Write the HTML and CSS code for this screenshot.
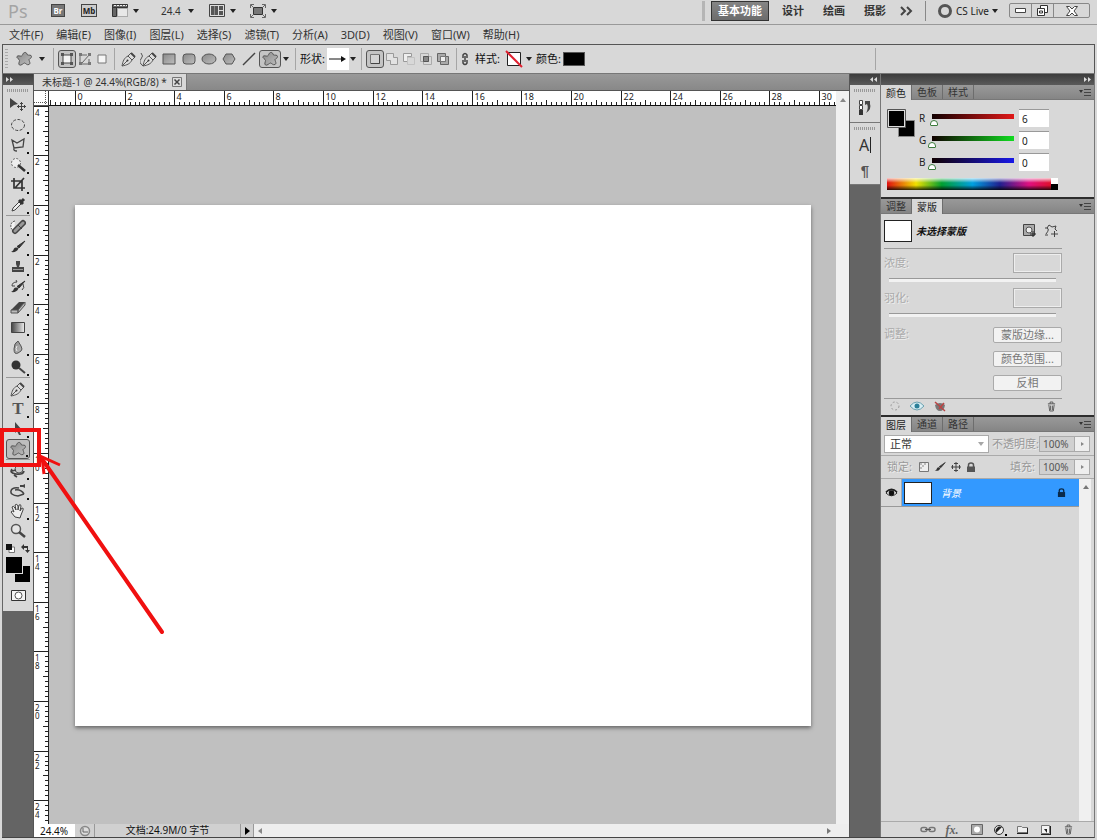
FILE: index.html
```html
<!DOCTYPE html>
<html lang="zh-CN">
<head>
<meta charset="utf-8">
<title>未标题-1 @ 24.4%(RGB/8)</title>
<link rel="stylesheet" href="styles.css">
</head>
<body>
<svg class="defs" aria-hidden="true">
  <linearGradient id="metal" x1="0" y1="0" x2="1" y2="1"><stop offset="0" stop-color="#8a8a8a"/><stop offset="1" stop-color="#bdbdbd"/></linearGradient>
  <linearGradient id="fade"><stop offset="0" stop-color="#444"/><stop offset="1" stop-color="#eee"/></linearGradient>
  <symbol id="blob" viewBox="0 0 18 16"><path d="M9.500 1.500c2-.5 2.500 1.500 3 2.500 1 .5 4-.5 4 1.500s-2 2-2.500 3c0 1.500 2 4 0 5s-3.500-1.500-4.500-1.500-3.500 3-5 2 0-3 0-4.500S1 7 2 5.500s3 0 4.500-.5S7.500 2 9.500 1.500Z" fill="url(#metal)" stroke="#555"/></symbol>
  <symbol id="caret" viewBox="0 0 6 4"><path d="M0 0h6L3 4Z" fill="#222"/></symbol>
  <symbol id="brush" viewBox="0 0 16 16"><path d="M15 2 9 9 7 7.500Z" fill="#333" stroke="#333"/><path d="M8.500 9.500C7 13 4 13.500 1 13c2-1 2.500-2 3-3.500 1-1.500 3-1.500 4.500 0Z" fill="#333"/></symbol>
  <symbol id="pen" viewBox="0 0 16 16"><path d="M1 15C2 10 3 7 7 5l4 4c-2 4-5 5-10 6ZM7 5l3-3 4 4-3 3M1 15l5-5" fill="#ddd" stroke="#555"/><path d="m10 2 4 4" stroke="#444" stroke-width="2"/><circle cx="6.500" cy="9.500" r="1" fill="#333"/></symbol>
  <symbol id="eye" viewBox="0 0 14 10"><path d="M1 5q6-7 12 0-6 6-12 0Z" fill="#e9e9e9" stroke="#222"/><circle cx="7" cy="5" r="3" fill="#111"/><path d="M1 4q6-6 12 0" fill="none" stroke="#222" stroke-width="1.500"/></symbol>
  <symbol id="lock" viewBox="0 0 10 10"><path d="M2.500 5V3q0-2 2.500-2t2.500 2v2" fill="none" stroke="currentColor" stroke-width="1.500"/><path d="M1 4.500h8V10H1Z" fill="currentColor"/></symbol>
  <symbol id="trash" viewBox="0 0 10 12"><path d="M1 3h8M3.500 3V1h3v2M2 4l1 7h4l1-7M4 5v5M6 5v5" fill="none" stroke="#555"/></symbol>
  <symbol id="menu" viewBox="0 0 12 8"><path d="M0 2h4L2 5Z" fill="#333"/><path d="M5 1.500h7M5 4.500h7M5 7.500h7" stroke="#444"/></symbol>
</svg>

<header class="appbar">
  <div class="logo">Ps</div>
  <button class="badge" aria-label="Bridge">Br</button>
  <button class="badge mb" aria-label="Mini Bridge">Mb</button>
  <button class="pick" aria-label="查看额外内容"><svg width="16" height="13"><path d="M.5.500h15v3H.5ZM.5 3.500h4v9h-4Z" fill="#666" stroke="#333"/><path d="M2 1.500h13" stroke="#eee" stroke-dasharray="2 1"/><path d="M5.500 4.500h10v8h-10Z" fill="#e8e8e8" stroke="#777" stroke-dasharray="1"/></svg><svg class="caret"><use href="#caret"/></svg></button>
  <button class="pick zoom">24.4<svg class="caret"><use href="#caret"/></svg></button>
  <button class="pick" aria-label="排列文档"><svg width="16" height="13"><path d="M.5.500h15v12H.5Z" fill="#ddd" stroke="#444"/><path d="M2 2h7v9H2ZM10 2h4v4h-4ZM10 7h4v4h-4Z" fill="#555"/><path d="M5.500 2v9" stroke="#888"/></svg><svg class="caret"><use href="#caret"/></svg></button>
  <button class="pick screen" aria-label="屏幕模式"><svg width="16" height="14"><path d="M3.500 3.500h9v7h-9Z" fill="#777" stroke="#333"/><path d="M.5 4V.500H4M12 .500h3.500V4M15.500 10v3.500H12M4 13.500H.5V10M1 1l2 2M15 1l-2 2M1 13l2-2M15 13l-2-2" fill="none" stroke="#666"/></svg><svg class="caret"><use href="#caret"/></svg></button>
  <nav class="workspaces">
    <button class="space on">基本功能</button>
    <button class="space">设计</button>
    <button class="space">绘画</button>
    <button class="space">摄影</button>
    <button class="more" aria-label="更多"><svg width="14" height="10"><path d="m1 1 4 4-4 4M7 1l4 4-4 4" fill="none" stroke="#444" stroke-width="2"/></svg></button>
  </nav>
  <button class="live"><svg width="16" height="16"><circle cx="8" cy="8" r="5.500" fill="none" stroke="#555" stroke-width="3"/></svg>CS Live<svg class="caret"><use href="#caret"/></svg></button>
  <div class="winctl">
    <button aria-label="最小化"><svg width="11" height="5"><path d="M.5.500h10v4H.5Z" fill="#fff" stroke="#444"/></svg></button>
    <button aria-label="还原"><svg width="11" height="11"><path d="M3.500.500h7v7h-7Z" fill="#fff" stroke="#333"/><path d="M.5 3.500h7v7h-7ZM2.500 6h3v2h-3Z" fill="#fff" stroke="#333"/></svg></button>
    <button class="close" aria-label="关闭"><svg width="12" height="10"><path d="M.5.500h3L6 3 8.500.500h3L8 5l3.500 4.500h-3L6 7 3.500 9.500h-3L4 5Z" fill="#fff" stroke="#444"/></svg></button>
  </div>
</header>

<nav class="menubar">
  <button>文件(F)</button><button>编辑(E)</button><button>图像(I)</button><button>图层(L)</button><button>选择(S)</button><button>滤镜(T)</button><button>分析(A)</button><button>3D(D)</button><button>视图(V)</button><button>窗口(W)</button><button>帮助(H)</button>
</nav>

<section class="options">
  <i class="grip"></i>
  <button class="opt wide" aria-label="自定形状工具"><svg width="18" height="16"><use href="#blob"/></svg></button>
  <button class="drop" aria-label="预设"><svg class="caret"><use href="#caret"/></svg></button>
  <i class="rule"></i>
  <button class="opt on" aria-label="形状图层"><svg width="14" height="14"><path d="M3 3h8v8H3Z" fill="#f4f4f4" stroke="#444"/><path d="M1 1h3v3H1ZM10 1h3v3h-3ZM1 10h3v3H1ZM10 10h3v3h-3Z" fill="#555"/></svg></button>
  <button class="opt slim" aria-label="路径"><svg width="14" height="14"><path d="M2 3h7M2 3v9h9V7M4 11 12 2" fill="none" stroke="#666"/><path d="M1 1h3v3H1ZM10 1h3v3h-3ZM1 10h3v3H1ZM10 10h3v3h-3Z" fill="#777"/></svg></button>
  <button class="opt slim" aria-label="填充像素"><svg width="10" height="10"><path d="M1 1h8v8H1Z" fill="#f6f6f6" stroke="#777"/></svg></button>
  <i class="rule"></i>
  <button class="opt tool" aria-label="钢笔"><svg width="16" height="16"><use href="#pen"/></svg></button>
  <button class="opt tool" aria-label="自由钢笔"><svg width="18" height="16"><use href="#pen" x="1"/><path d="M1 2q3 3 0 6t2 7" fill="none" stroke="#555"/></svg></button>
  <button class="opt tool" aria-label="矩形"><svg width="14" height="12"><path d="M1 1h12v10H1Z" fill="url(#metal)" stroke="#555"/></svg></button>
  <button class="opt tool" aria-label="圆角矩形"><svg width="14" height="12"><rect x="1" y="1" width="12" height="10" rx="3" fill="url(#metal)" stroke="#555"/></svg></button>
  <button class="opt tool" aria-label="椭圆"><svg width="16" height="12"><ellipse cx="8" cy="6" rx="7" ry="5" fill="url(#metal)" stroke="#555"/></svg></button>
  <button class="opt tool" aria-label="多边形"><svg width="14" height="14"><path d="M4 2h6l3 5-3 5H4L1 7Z" fill="url(#metal)" stroke="#555"/></svg></button>
  <button class="opt tool" aria-label="直线"><svg width="14" height="14"><path d="M1 13 13 1" stroke="#444" stroke-width="1.500"/></svg></button>
  <button class="opt on big" aria-label="自定形状"><svg width="18" height="16"><use href="#blob"/></svg></button>
  <button class="drop thin" aria-label="几何选项"><svg class="caret"><use href="#caret"/></svg></button>
  <i class="rule"></i>
  <span class="lbl">形状:</span>
  <button class="shape" aria-label="箭头形状"><svg width="18" height="8"><path d="M0 4h15" stroke="#111"/><path d="m12 1 5 3-5 3Z" fill="#111"/></svg></button>
  <button class="drop thin" aria-label="选择形状"><svg class="caret"><use href="#caret"/></svg></button>
  <i class="rule"></i>
  <button class="opt on" aria-label="新建"><svg width="12" height="12"><path d="M1.500 1.500h9v9h-9Z" fill="#d4d4d4" stroke="#777"/><path d="M2 10.500h8.500V2" fill="none" stroke="#444"/></svg></button>
  <button class="opt slim" aria-label="添加"><svg width="12" height="12"><path d="M.5.500h7v4h4v7h-7v-4h-4Z" fill="#e2e2e2" stroke="#999"/></svg></button>
  <button class="opt slim" aria-label="减去"><svg width="12" height="12"><path d="M.5 8.500v-8h8v3h-4v5Z" fill="#eee" stroke="#999"/><path d="M4.500 4.500h7v7h-7Z" fill="none" stroke="#c2c2c2"/></svg></button>
  <button class="opt slim" aria-label="交叉"><svg width="12" height="12"><path d="M.5.500h8v8h-8ZM3.500 3.500h8v8h-8Z" fill="none" stroke="#aaa"/><path d="M3.500 3.500h5v5h-5Z" fill="#888" stroke="#555"/></svg></button>
  <button class="opt slim" aria-label="排除"><svg width="12" height="12"><path d="M.5.500h8v8h-8ZM3.500 3.500h8v8h-8Z" fill="#aaa" stroke="#666"/><path d="M3.500 3.500h5v5h-5Z" fill="#eee" stroke="#777"/></svg></button>
  <i class="rule"></i>
  <svg class="chain" width="10" height="14"><path d="M3 6V3q2-3 4 0v3M3 8v3q2 3 4 0V8M5 4v6" fill="none" stroke="#444" stroke-width="1.500"/></svg>
  <span class="lbl">样式:</span>
  <button class="nostyle" aria-label="无样式"><svg width="18" height="18"><path d="M2.500 2.500h13v13h-13Z" fill="#fff" stroke="#222"/><path d="m1 1 16 16" stroke="#e02030" stroke-width="2"/></svg></button>
  <button class="drop" aria-label="选择样式"><svg class="caret"><use href="#caret"/></svg></button>
  <span class="lbl">颜色:</span>
  <button class="ink" aria-label="颜色"></button>
  <i class="rule tail"></i>
</section>

<main class="workspace">
  <aside class="tools">
    <div class="dockhead left"><svg width="7" height="5"><path d="m0 0 3 2.500L0 5ZM4 0l3 2.500L4 5Z" fill="#ddd"/></svg></div>
    <div class="toolbox">
      <i class="dots"></i>
      <button aria-label="移动"><svg><path d="m0 1 8 6-4 1-4 3Z" fill="#444"/><path d="M11.500 5v9M7 9.500h9M10 6.500h3M10 12.500h3M8.500 8v3M14.500 8v3" stroke="#444"/></svg></button>
      <button class="sub" aria-label="椭圆选框"><svg><ellipse cx="8" cy="8" rx="6.500" ry="5.500" fill="none" stroke="#444" stroke-dasharray="3 1.500"/></svg></button>
      <button class="sub" aria-label="套索"><svg><path d="m2 3 5 3 7-4-1 8-9 1ZM4 11q-1 3 3 3" fill="none" stroke="#444" stroke-width="1.300"/></svg></button>
      <button class="sub" aria-label="魔棒"><svg><circle cx="6" cy="6" r="4.500" fill="#eee" stroke="#666" stroke-dasharray="2 1.500"/><path d="m8 8 7 6" stroke="#333" stroke-width="2.500"/></svg></button>
      <button class="sub" aria-label="裁剪"><svg><path d="M4 1v10h11M1 4h11v10M5 11 14 1" fill="none" stroke="#333" stroke-width="1.700"/></svg></button>
      <button class="sub" aria-label="吸管"><svg><path d="m2 14 1-3 6-6 2 2-6 6Z" fill="#eee" stroke="#444"/><path d="m9 3 4 4M10 6l4-4" stroke="#333" stroke-width="3"/></svg></button>
      <hr>
      <button class="sub" aria-label="修复画笔"><svg><path d="M5 2Q0 3 1 9l3 4" fill="#f4f4f4" stroke="#555" stroke-dasharray="2 1"/><path d="m5 12 8-8" stroke="#444" stroke-width="6" stroke-linecap="round"/><path d="m5 12 8-8" stroke="#999" stroke-width="3" stroke-linecap="round"/><path d="m8 6 4 4" stroke="#444"/></svg></button>
      <button class="sub" aria-label="画笔"><svg><use href="#brush"/></svg></button>
      <button class="sub" aria-label="图章"><svg><path d="M6 2h4v3L9 8h5v5H2V8h5L6 5Z" fill="#444"/><path d="M3 10.500h10" stroke="#999"/></svg></button>
      <button class="sub" aria-label="历史画笔"><svg><use href="#brush"/><path d="M2 7q0-4 5-4L6 1M2 7h3M13 5q2 4-1 6" fill="none" stroke="#444"/></svg></button>
      <button class="sub" aria-label="橡皮擦"><svg><path d="m1 11 8-8h6L8 11Z" fill="#444"/><path d="M1 11h7v3H1ZM8 14l7-8V3l-7 8Z" fill="#bbb" stroke="#555"/></svg></button>
      <button class="sub" aria-label="渐变"><svg><path d="M1.500 3.500h13v10h-13Z" fill="url(#fade)" stroke="#444"/></svg></button>
      <button class="sub" aria-label="模糊"><svg><path d="M8 2q4 6 4 8t-4 4-4-4 4-8Z" fill="url(#metal)" stroke="#555"/><path d="M7 7q-2 3 0 5" fill="none" stroke="#eee"/></svg></button>
      <button class="sub" aria-label="减淡"><svg><circle cx="6" cy="6" r="4.500" fill="#333"/><path d="m9 9 6 5" stroke="#444" stroke-width="2"/></svg></button>
      <hr>
      <button class="sub" aria-label="钢笔"><svg><use href="#pen"/></svg></button>
      <button class="sub" aria-label="文字"><span class="type">T</span></button>
      <button class="sub" aria-label="路径选择"><svg><path d="m5 1 7 8H9l2 5H9L7 10l-2 2Z" fill="#444"/></svg></button>
      <button class="sub active" aria-label="自定形状"><svg class="shapeicon"><use href="#blob"/></svg></button>
      <hr>
      <button class="sub" aria-label="3D 旋转"><svg><circle cx="9" cy="6" r="4" fill="#ccc" stroke="#555"/><path d="M2 6q-3 4 4 5t8-3M4 12l3 2M6 7l-4 1" fill="none" stroke="#444" stroke-width="1.700"/></svg></button>
      <button class="sub" aria-label="3D 相机"><svg><path d="M9 5Q2 4 1 8t7 5l6-2M5 7q6-1 9 4" fill="none" stroke="#444" stroke-width="1.500"/><path d="M10 2h3l2-1v4l-2-1h-3Z" fill="#444"/></svg></button>
      <button class="sub" aria-label="抓手"><svg><path d="m5 14-4-5q1-2 3 0L2 4q1-2 3 1l1 2-1-5q2-2 3 1v4l1-5q2-1 2 1l-1 5 2-3q2 0 1 2l-2 5-1 3Z" fill="#eee" stroke="#444"/></svg></button>
      <button aria-label="缩放"><svg><circle cx="6" cy="6" r="4.500" fill="#e5e5e5" stroke="#555" stroke-width="1.500"/><path d="m9 9 6 5" stroke="#444" stroke-width="2.500"/></svg></button>
      <div class="mini"><svg width="9" height="9"><path d="M3 3h5.500v5.500H3Z" fill="#fff" stroke="#777"/><path d="M0 0h6v6H0Z" fill="#111"/></svg><svg width="9" height="9"><path d="M0 3 3 0v2h4v4h2L6.500 9 4 6h2V4H3v2Z" fill="#333"/></svg></div>
      <svg class="inks" width="25" height="26"><path d="M9 9h15v16H9Z"/><path d="M0 0h17v17H0Z" fill="#ddd"/><path d="M0 0h16v16H0Z"/></svg>
      <button class="mask" aria-label="快速蒙版"><svg width="15" height="11"><path d="M.5.500h14v10H.5Z" fill="#f5f5f5" stroke="#333"/><circle cx="7.500" cy="5.500" r="3.500" fill="#fff" stroke="#555"/></svg></button>
    </div>
  </aside>

  <section class="document">
    <div class="tabs"><div class="tab">未标题-1 @ 24.4%(RGB/8) *<button aria-label="关闭文档"><svg width="10" height="10"><path d="M.5.500h9v9h-9Z" fill="#ddd" stroke="#777"/><path d="m2.500 2.500 5 5M7.500 2.500l-5 5" stroke="#444" stroke-width="1.500"/></svg></button></div></div>
    <div class="view">
      <svg class="corner"><path d="M11.500 0v15M0 11.500h15" stroke="#555" stroke-dasharray="1"/></svg>
      <svg class="ruler-x" id="ruler-x"></svg>
      <svg class="ruler-y" id="ruler-y"></svg>
      <div class="pasteboard"><div class="paper"></div></div>
      <div class="scroll-y"><svg width="6" height="4"><path d="M0 4 3 0l3 4Z" fill="#888"/></svg></div>
    </div>
    <footer class="status">
      <input class="pct" value="24.4%" aria-label="缩放比例">
      <svg class="clock" width="12" height="12"><circle cx="6" cy="6" r="4.500" fill="#ddd" stroke="#888" stroke-width="1.500"/><path d="M4 3v4h5" fill="none" stroke="#666"/></svg>
      <div class="info">文档:24.9M/0 字节</div>
      <button class="play" aria-label="状态选项"><svg width="5" height="8"><path d="m0 0 5 4-5 4Z"/></svg></button>
      <div class="scroll-x"><svg width="4" height="6"><path d="M4 0 0 3l4 3Z" fill="#888"/></svg><svg width="4" height="6"><path d="m0 0 4 3-4 3Z" fill="#777"/></svg></div>
    </footer>
  </section>

  <aside class="dock">
    <div class="dockhead"><svg width="7" height="5"><path d="M3 0 0 2.500 3 5ZM7 0 4 2.500 7 5Z" fill="#ddd"/></svg></div>
    <div class="dockbox">
      <i class="dots"></i>
      <button class="first" aria-label="历史记录"><svg width="14" height="16"><path d="M1.500.500h3v4h-3ZM1.500 5.500h3v4h-3Z" fill="#fff" stroke="#444"/><path d="M1 10h4v5H1Z" fill="#333"/><path d="M7 5V1h5v3q2 5-4 9 3-5 1-9Z" fill="#444"/></svg></button>
    </div>
    <div class="dockbox">
      <i class="dots"></i>
      <button aria-label="字符" class="char"><span>A</span></button>
      <button aria-label="段落" class="para">¶</button>
    </div>
  </aside>

  <aside class="panels">
    <div class="dockhead right"><svg width="7" height="5"><path d="m0 0 3 2.500L0 5ZM4 0l3 2.500L4 5Z" fill="#ddd"/></svg></div>

    <section class="panel">
      <div class="ptabs"><button class="on">颜色</button><button>色板</button><button>样式</button><svg class="pmenu"><use href="#menu"/></svg></div>
      <div class="color">
        <svg class="pair" width="29" height="29"><path d="M11.500 11.500h16v16h-16Z" stroke="#888"/><path d="M.5.500h18v18H.5Z" fill="#ddd" stroke="#555"/><path d="M2 2h15v15H2Z"/></svg>
        <div class="channels">
          <label for="r">R</label><input type="range" id="r" class="red" max="255" value="6"><input class="num" value="6" aria-label="R 值">
          <label for="g">G</label><input type="range" id="g" class="green" max="255" value="0"><input class="num" value="0" aria-label="G 值">
          <label for="b">B</label><input type="range" id="b" class="blue" max="255" value="0"><input class="num" value="0" aria-label="B 值">
        </div>
        <div class="spectrum"><i></i></div>
      </div>
    </section>

    <section class="panel">
      <div class="ptabs"><button>调整</button><button class="on">蒙版</button><svg class="pmenu"><use href="#menu"/></svg></div>
      <div class="masks">
        <div class="mhead"><i class="thumb"></i><b>未选择蒙版</b>
          <button aria-label="添加像素蒙版"><svg width="13" height="13"><path d="M.5.500h11v11H.5Z" fill="#aaa" stroke="#444"/><circle cx="6" cy="6" r="3" fill="#eee" stroke="#555"/><path d="M7 10h6M10 7v6" stroke="#222"/></svg></button>
          <button aria-label="添加矢量蒙版"><svg width="13" height="13"><path d="M1 10Q5 5 2 4l2-3 3 2 4-1-1 3 2 2" fill="none" stroke="#444"/><path d="M0 4h3M0 11h3M6 10h7M9.500 7v6" stroke="#444"/></svg></button>
        </div>
        <div class="mrow"><label for="density">浓度:</label><input class="off" id="density" disabled></div>
        <input type="range" class="flat" disabled aria-label="浓度">
        <div class="mrow"><label for="feather">羽化:</label><input class="off" id="feather" disabled></div>
        <input type="range" class="flat" disabled aria-label="羽化">
        <div class="adjust"><span>调整:</span><div><button disabled>蒙版边缘...</button><button disabled>颜色范围...</button><button disabled>反相</button></div></div>
        <div class="mfoot">
          <svg width="10" height="10"><circle cx="5" cy="5" r="4" fill="none" stroke="#999" stroke-dasharray="2"/></svg>
          <svg width="14" height="10"><path d="M0 5q7-8 14 0-7 8-14 0Z" fill="#d8eef4" stroke="#6aa0ae"/><circle cx="7" cy="5" r="2.500" fill="#2a7f98"/></svg>
          <svg width="12" height="11"><path d="M1 4q5-4 10 0-1 6-5 6T1 4Z" fill="#777"/><path d="m1 1 10 9M10 2 5 8" stroke="#b44" stroke-width="1.500"/></svg>
          <svg class="end" width="9" height="11" viewBox="0 0 10 12"><use href="#trash" width="10" height="12"/></svg>
        </div>
      </div>
    </section>

    <section class="panel layers">
      <div class="ptabs"><button class="on">图层</button><button>通道</button><button>路径</button><svg class="pmenu"><use href="#menu"/></svg></div>
      <div class="lrow">
        <div class="blend"><select aria-label="混合模式"><option>正常</option></select><svg class="caret"><use href="#caret"/></svg></div>
        <label for="opacity">不透明度:</label><input id="opacity" value="100%" disabled><button class="step" disabled aria-label="调整不透明度"><svg width="3" height="4"><path d="m0 0 3 2-3 2Z" fill="#888"/></svg></button>
      </div>
      <div class="lrow locks">
        <span>锁定:</span>
        <button aria-label="锁定透明像素"><svg width="12" height="12"><path d="M1.500 1.500h9v9h-9Z" fill="#eee" stroke="#777"/><path d="M2 2h2v2H2ZM6 2h2v2H6ZM4 4h2v2H4ZM2 6h2v2H2Z" fill="#bbb"/></svg></button>
        <button aria-label="锁定图像像素"><svg width="12" height="12" viewBox="0 0 16 16"><use href="#brush" width="16" height="16"/></svg></button>
        <button aria-label="锁定位置"><svg width="12" height="12"><path d="M6 1v10M1 6h10M4 2.500h4M4 9.500h4M2.500 4v4M9.500 4v4" stroke="#444"/></svg></button>
        <button aria-label="锁定全部"><svg class="grey" width="10" height="10"><use href="#lock"/></svg></button>
        <label for="fill">填充:</label><input id="fill" value="100%" disabled><button class="step" disabled aria-label="调整填充"><svg width="3" height="4"><path d="m0 0 3 2-3 2Z" fill="#888"/></svg></button>
      </div>
      <div class="list">
        <div class="rows">
          <div class="layer"><button class="vis" aria-label="可见性"><svg width="13" height="10"><use href="#eye"/></svg></button><div class="item"><i class="thumb"></i><em>背景</em><svg width="9" height="9" viewBox="0 0 10 10"><use href="#lock" width="10" height="10"/></svg></div></div>
        </div>
        <div class="lscroll"><svg width="6" height="4"><path d="M0 4 3 0l3 4Z" fill="#777"/></svg></div>
      </div>
      <div class="lfoot">
        <button aria-label="链接图层"><svg width="16" height="8"><rect x="1" y="1.500" width="6" height="4" rx="2" fill="none" stroke="#777" stroke-width="1.500"/><rect x="9" y="1.500" width="6" height="4" rx="2" fill="none" stroke="#777" stroke-width="1.500"/><path d="M5 3.500h6" stroke="#555"/></svg></button>
        <button class="fx">fx.</button>
        <button aria-label="添加蒙版"><svg width="12" height="11"><path d="M.5.500h11v10H.5Z" fill="#aaa" stroke="#666"/><circle cx="6" cy="5.500" r="3" fill="#fff"/></svg></button>
        <button aria-label="调整图层"><svg width="14" height="12"><circle cx="6" cy="6" r="4.500" fill="#eee" stroke="#333"/><path d="M3 9A4.500 4.500 0 0 1 9 3Z" fill="#222"/><path d="M12 10h2v2h-2Z"/></svg></button>
        <button aria-label="新建组"><svg width="11" height="9"><path d="M.5 1.500h4l1 1h5v5H.5Z" fill="#eee" stroke="#777"/><path d="M0 8.500h11M10.500 3v5" stroke="#222"/></svg></button>
        <button aria-label="新建图层"><svg width="10" height="10"><path d="M.5.500h8v8h-8Z" fill="#f5f5f5" stroke="#777"/><path d="M0 9.500h10M9.500 1v8" stroke="#222"/><path d="M3 4h3v4Z" fill="#222"/></svg></button>
        <button aria-label="删除图层"><svg width="9" height="11" viewBox="0 0 10 12"><use href="#trash" width="10" height="12"/></svg></button>
      </div>
    </section>
  </aside>
</main>

<svg class="callout" width="180" height="220" fill="none" stroke="#f01010" aria-hidden="true"><path d="M2 5h37v35H2Z" stroke-width="4"/><path d="M42 34 162 207" stroke-width="4" stroke-linecap="round"/><path d="m60 40-18-8 2 17" stroke-width="3"/></svg>
<script src="rulers.js"></script>
</body>
</html>
```

FILE: styles.css
```css
* { box-sizing: border-box; }
body {
  margin: 0; height: 100vh; display: flex; flex-direction: column; overflow: hidden;
  position: relative; padding-bottom: 2px; background: #d8d8d8; color: #333;
  font: 11px/14px "Noto Sans", "Noto Sans CJK SC", sans-serif;
}
button, input, select { font: inherit; color: inherit; margin: 0; padding: 0; border: 0; background: none; border-radius: 0; }
button { display: flex; align-items: center; justify-content: center; white-space: nowrap; }
svg { display: block; flex: none; }
.defs { position: absolute; width: 0; height: 0; }
.caret { width: 6px; height: 4px; }

.appbar { display: flex; align-items: center; height: 25px; padding: 0 7px 3px 8px; border-bottom: 1px solid #999; flex: none; }
.logo { width: 43px; font-size: 18px; line-height: 20px; color: #a4a4a4; }
.badge { width: 14px; height: 13px; background: #777; border: 1px solid #444; color: #fff; font-size: 8px; line-height: 11px; font-weight: bold; margin-right: 16px; }
.badge.mb { width: 16px; background: #ccc; color: #222; margin-right: 15px; }
.pick { gap: 5px; margin-right: 22px; font-size: 10px; }
.pick.zoom { gap: 7px; margin-right: 15px; }
.pick.screen { margin-left: -8px; }
.workspaces { display: flex; align-items: center; height: 20px; margin-left: auto; border-left: 3px solid #b5b5b5; padding-left: 6px; font-weight: bold; }
.space { height: 20px; padding: 0 6px; margin-right: 7px; }
.space.on { background: linear-gradient(#858585, #6c6c6c); border: 1px solid #333; color: #fff; }
.more { margin-left: 1px; margin-right: 11px; }
.live { border-left: 1px solid #888; height: 20px; padding-left: 11px; gap: 3px; font-size: 10px; color: #222; }
.winctl { display: flex; height: 15px; margin-left: 11px; border: 1px solid #888; border-radius: 2px; }
.winctl button { width: 22px; border-right: 1px solid #888; }
.winctl .close { width: 35px; border: 0; }

.menubar { display: flex; align-items: center; gap: 13px; height: 19px; padding-left: 9px; flex: none; }
.options { display: flex; align-items: center; height: 30px; margin: 0 2px; border: 1px solid #555; border-bottom-color: #777; padding-left: 2px; flex: none; color: #111; }
.grip { width: 3px; height: 20px; margin-right: 6px; background: repeating-linear-gradient(#aaa 0 1px, #d8d8d8 1px 3px); }
.opt { width: 18px; height: 18px; flex: none; }
.opt.wide { width: 20px; }
.opt.slim { width: 17px; }
.opt.tool { width: 20px; height: 20px; }
.opt.big { width: 22px; }
.opt.on { border: 1px solid #555; border-radius: 3px; background: #c4c4c4; }
.drop { width: 13px; height: 20px; }
.wide + .drop { width: 15px; }
.drop.thin { width: 10px; }
.rule { width: 1px; height: 22px; background: #a5a5a5; margin: 0 4px; }
.rule.tail { margin-left: auto; margin-right: 218px; }
.lbl { white-space: nowrap; margin-right: 2px; }
.shape { width: 22px; height: 22px; background: #fff; }
.shape + .drop.thin { width: 8px; }
.chain { margin: 0 5px 0 -1px; }
.nostyle { margin-left: 3px; }
.ink { width: 22px; height: 14px; background: #000; border: 1px solid #555; }

.workspace { display: flex; flex: 1; min-height: 0; margin: 0 2px; border-bottom: 1px solid #444; border-right: 1px solid #777; }
.dockhead { height: 11px; flex: none; display: flex; align-items: center; justify-content: flex-end; padding: 0 3px; background: linear-gradient(#3c3c3c, #5a5a5a); }
.dockhead.left { justify-content: flex-start; }
.tools { width: 32px; flex: none; background: #646464; border-right: 1px solid #555; border-left: 1px solid #666; }
.toolbox { display: flex; flex-direction: column; height: 526px; background: #d8d8d8; }
.dots { height: 3px; margin: 4px 4px 3px; flex: none; background: repeating-linear-gradient(90deg, #999 0 1px, #d8d8d8 1px 2px); }
.toolbox button { width: 24px; height: 20px; margin-left: 3px; flex: none; position: relative; }
.toolbox button svg { width: 16px; height: 16px; }
.toolbox .sub::after { content: ""; position: absolute; right: 1px; bottom: 1px; border: 1px solid #111; }
.toolbox .active { border: 1px solid #555; border-radius: 3px; background: #bdbdbd; }
.toolbox button .shapeicon { width: 18px; }
.toolbox hr { width: 24px; height: 1px; margin: 0 0 1px 3px; border: 0; background: #999; flex: none; }
.toolbox .type { font: bold 17px/18px "Liberation Serif", serif; color: #555; }
.mini { display: flex; gap: 6px; padding: 3px 0 0 3px; height: 16px; }
.inks { margin: 0 0 6px 3px; }
.toolbox .mask { height: 12px; }
.toolbox .mask svg { width: 15px; height: 11px; }

.document { flex: 1; min-width: 0; display: flex; flex-direction: column; }
.tabs { height: 17px; flex: none; display: flex; background: linear-gradient(#999, #888); border-bottom: 1px solid #555; }
.tab { display: flex; align-items: center; gap: 5px; padding: 0 4px 0 8px; background: #d8d8d8; border-right: 1px solid #777; white-space: nowrap; font-size: 10px; }
.view { flex: 1; min-height: 0; display: grid; grid-template: 15px minmax(0, 1fr) / 15px minmax(0, 1fr) 13px; }
.corner { width: 15px; height: 15px; background: #fff; border-bottom: 1px solid #555; border-right: 1px solid #333; }
.ruler-x { width: 100%; height: 15px; background: #fff; border-bottom: 1px solid #111; }
.ruler-y { grid-row: 2; width: 15px; height: 100%; background: #fff; border-right: 1px solid #222; }
.ruler-x text { font-size: 9px; fill: #222; }
.ruler-y text { font-size: 8px; fill: #222; }
.pasteboard { grid-row: 2; grid-column: 2; display: flex; padding: 99px 25px 98px 26px; background: #c0c0c0; }
.paper { flex: 1; background: #fff; box-shadow: 0 2px 4px #666; }
.scroll-y { grid-area: 1 / 3 / 3 / 4; background: #f0f0f0; padding: 7px 0 0 4px; }
.status { height: 13px; flex: none; display: flex; align-items: center; background: #d0d0d0; color: #111; font-size: 10px; line-height: 12px; }
.pct { width: 41px; height: 13px; padding-left: 6px; background: #fff; }
.clock { margin: 0 3px 0 4px; }
.info { width: 147px; height: 13px; text-align: center; border-left: 1px solid #999; border-right: 1px solid #999; white-space: nowrap; }
.play { width: 13px; height: 13px; border-right: 1px solid #999; }
.scroll-x { flex: 1; display: flex; justify-content: space-between; align-items: center; height: 13px; padding: 0 18px 0 4px; background: #eee; }

.dock { width: 31px; flex: none; background: #646464; border-left: 1px solid #555; }
.dockbox { background: #d8d8d8; border-bottom: 1px solid #777; padding-top: 1px; }
.dockbox .dots { display: block; margin: 3px 4px 2px; }
.dockbox button { width: 100%; height: 26px; }
.dockbox .first { height: 28px; }
.char { font-size: 16px; line-height: 16px; color: #333; }
.char span { border-right: 1px solid #222; padding-right: 1px; }
.para { font: bold 15px/20px "Liberation Sans", sans-serif; color: #555; }

.panels { width: 214px; flex: none; display: flex; flex-direction: column; border-left: 1px solid #777; }
.panel + .panel { border-top: 2px solid #2d2d2d; }
.ptabs { display: flex; height: 15px; background: linear-gradient(#999, #858585); border-bottom: 1px solid #777; color: #333; }
.ptabs button { width: 31px; border-right: 1px solid #6d6d6d; font-size: 10px; line-height: 14px; }
.ptabs .on { background: #d8d8d8; color: #222; height: 15px; }
.pmenu { width: 12px; height: 8px; margin: 3px 3px 0 auto; }
.color { display: grid; grid-template-columns: 32px 132px 1fr; height: 97px; padding: 7px 0 0 6px; align-content: start; }
.pair { margin-top: 2px; }
.channels { display: grid; grid-template-columns: 9px 90px 30px; grid-auto-rows: 22px; align-items: center; color: #222; font-size: 10px; }
.channels .num { width: 30px; height: 18px; margin-left: 1px; padding-left: 3px; background: #fff; border-top: 1px solid #999; }
.channels input[type=range] { appearance: none; width: 90px; height: 16px; margin-left: 0; background: linear-gradient(90deg, #100, var(--end)) no-repeat 4px 4px / 82px 5px; }
.channels input[type=range]::-webkit-slider-thumb { appearance: none; width: 8px; height: 6px; margin-top: 9px; background: #fff; border: 1px solid #3b7a3b; border-radius: 4px 4px 1px 1px; }
.red { --end: #e01818; }
.green { --end: #10dc20; }
.blue { --end: #1818e8; }
.spectrum { grid-column: 1 / 3; width: 171px; height: 12px; margin-top: 5px; display: flex; justify-content: flex-end; background: linear-gradient(#ffffffcc, #fff0 40%, #0000 60%, #000c), linear-gradient(90deg, #e01010, #f0e000 17%, #00a030 32%, #00a0e0 50%, #202090 66%, #e01080 83%, #e01010); }
.spectrum i { width: 7px; background: linear-gradient(#fff 50%, #000 50%); }

.masks { padding: 6px 32px 0 3px; height: 201px; }
.mhead { display: flex; align-items: center; height: 29px; padding-bottom: 7px; border-bottom: 1px solid #999; }
.mhead b { flex: 1; margin-left: 4px; font-size: 10px; font-style: italic; color: #111; }
.mhead button { margin-right: 9px; }
.mhead button:last-child { margin-right: 4px; }
.thumb { width: 28px; height: 22px; flex: none; background: #fff; border: 1px solid #222; }
.mrow { display: flex; align-items: center; justify-content: space-between; height: 20px; margin-top: 4px; color: #aaa; text-shadow: 1px 1px #eee; }
.off { width: 49px; height: 20px; border: 1px solid #aaa; outline: 1px solid #eee; outline-offset: -2px; }
.flat { display: block; appearance: none; width: 167px; height: 4px; margin: 5px 0 6px 5px; background: #f2f2f2; border-top: 1px solid #999; }
.flat::-webkit-slider-thumb { appearance: none; width: 0; }
.flat + .mrow { margin-top: 0; }
.adjust { display: flex; justify-content: space-between; padding-top: 4px; color: #aaa; text-shadow: 1px 1px #eee; }
.adjust div { display: flex; flex-direction: column; gap: 8px; }
.adjust button { width: 69px; height: 16px; background: #f2f2f2; border: 1px solid #aaa; border-radius: 2px; color: #777; }
.mfoot { display: flex; align-items: center; gap: 10px; height: 15px; margin-top: 7px; padding: 0 6px; border-top: 1px solid #999; }
.mfoot .end { margin-left: auto; }

.layers { flex: 1; min-height: 0; display: flex; flex-direction: column; }
.layers .ptabs { flex: none; }
.lrow { display: flex; align-items: center; height: 24px; flex: none; padding: 0 4px 0 3px; border-bottom: 1px solid #aaa; color: #999; text-shadow: 1px 1px #eee; white-space: nowrap; }
.blend { flex: 1; display: flex; align-items: center; margin-right: 3px; height: 18px; border: 1px solid #aaa; background: #fff; padding-right: 4px; }
.blend select { flex: 1; min-width: 0; appearance: none; height: 16px; padding-left: 5px; color: #333; }
.blend .caret { opacity: .4; }
.lrow input { width: 36px; height: 16px; border: 1px solid #aaa; padding-left: 3px; background: #d0d0d0; color: #555; font-size: 10px; }
.lrow .step { width: 15px; height: 16px; border: 1px solid #aaa; border-left: 0; background: #eee; }
.locks { height: 23px; gap: 4px; padding-left: 6px; }
.locks label { margin-left: auto; }
.locks .step { margin-left: -4px; }
.locks button:nth-of-type(1) { margin-left: 2px; }
.grey { color: #555; }
.list { flex: 1; min-height: 0; display: flex; }
.rows { flex: 1; }
.layer { display: flex; height: 28px; border-bottom: 1px solid #999; }
.vis { width: 21px; border-right: 1px solid #aaa; }
.item { flex: 1; display: flex; align-items: center; padding: 0 13px 0 2px; background: #3399ff; color: #0a2a4a; }
.item em { flex: 1; margin-left: 9px; font-size: 10px; color: #fff; }
.lscroll { width: 12px; margin-right: 3px; padding: 6px 0 0 4px; background: #f0f0f0; }
.lfoot { display: flex; align-items: center; justify-content: flex-end; height: 16px; flex: none; border-top: 1px solid #aaa; padding-right: 14px; }
.lfoot button { width: 23px; }
.lfoot .fx { width: 26px; }
.fx { font: italic bold 12px/12px "Liberation Serif", serif; color: #666; }

/* Drawn over the tool column and the canvas */
.callout { position: absolute; left: 0; top: 425px; pointer-events: none; }
```

FILE: rulers.js
```javascript
// Tick marks: one label every two units, ten small ticks between labels.
const STEP = 49.6;
const NS = "http://www.w3.org/2000/svg";

function drawRuler(id, origin, vertical) {
  const svg = document.getElementById(id);
  const box = svg.getBoundingClientRect();
  const length = vertical ? box.height : box.width;
  svg.replaceChildren();
  let d = "";
  for (let i = -20; ; i++) {
    const p = Math.round(origin + (i * STEP) / 10) + 0.5;
    if (p > length) break;
    if (p < 0) continue;
    const start = i % 10 === 0 ? 0 : i % 5 === 0 ? 9 : 11;
    d += vertical ? `M${start} ${p}H15` : `M${p} ${start}V15`;
    if (i % 10 || p + 12 > length) continue;
    const digits = String(Math.abs(i / 5));
    const parts = vertical ? [...digits] : [digits];
    parts.forEach((part, n) => {
      const text = document.createElementNS(NS, "text");
      text.setAttribute("x", vertical ? 1 : p + 2);
      text.setAttribute("y", vertical ? p + 9 + n * 8 : 9);
      text.textContent = part;
      svg.append(text);
    });
  }
  const path = document.createElementNS(NS, "path");
  path.setAttribute("d", d);
  path.setAttribute("stroke", "#222");
  svg.append(path);
}

function drawRulers() {
  drawRuler("ruler-x", 26, false);
  drawRuler("ruler-y", 99, true);
}

drawRulers();
window.addEventListener("resize", drawRulers);
```
